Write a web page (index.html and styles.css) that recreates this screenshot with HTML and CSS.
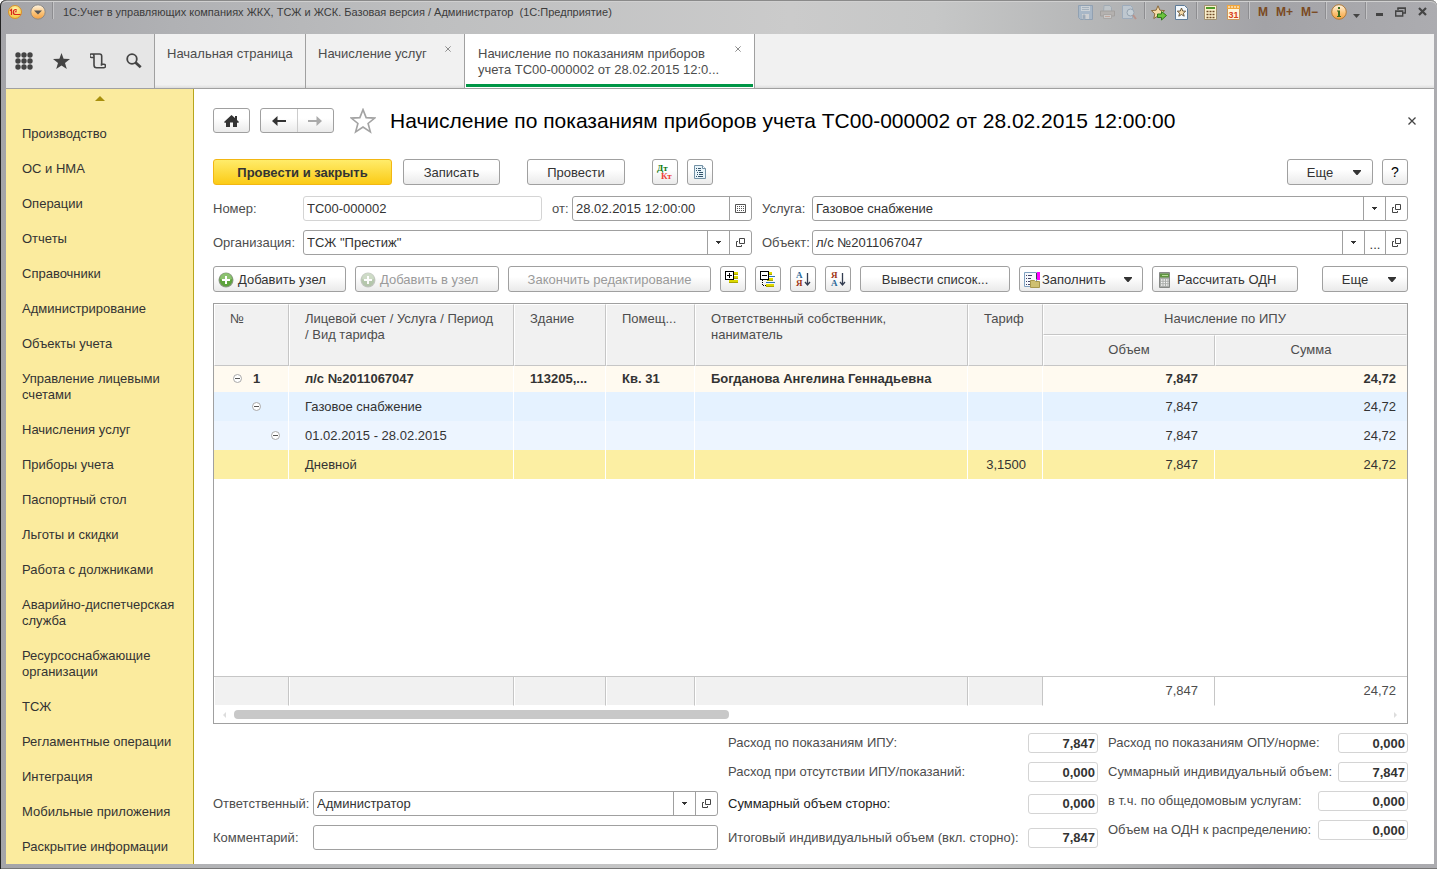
FILE: index.html
```html
<!DOCTYPE html>
<html lang="ru">
<head>
<meta charset="utf-8">
<title>Начисление по показаниям приборов учета</title>
<link rel="stylesheet" href="styles.css">
</head>
<body>
<svg class="sprite" aria-hidden="true">
  <symbol id="i-down" viewBox="0 0 5 3"><path d="M0 0h5v1H4v1H3v1H2V2H1V1H0z" fill="#333"/></symbol>
  <symbol id="i-caret" viewBox="0 0 8 5"><path d="M0 0h8v1L4.500 5h-1L0 1z" fill="#333"/></symbol>
  <symbol id="i-open" viewBox="0 0 9 9"><path d="M3.500.5h5v5h-5zM2 3.500H.5v5h5V7" fill="none" stroke="#444"/></symbol>
  <symbol id="i-x" viewBox="0 0 8 8"><path d="M.5.5l7 7M7.500.5l-7 7" fill="none" stroke="currentColor" stroke-width="1.300"/></symbol>
  <symbol id="i-plus" viewBox="0 0 16 16"><circle cx="8" cy="8" r="7.500" fill="#8e9a88"/><circle cx="8" cy="8" r="6.500" fill="#5ea33c"/><path d="M2 7a6 6 0 0 1 12 0q-6 3-12 0z" fill="#8cc270"/><path d="M8 4v8M4 8h8" stroke="#fff" stroke-width="2"/></symbol>
  <symbol id="i-minus" viewBox="0 0 9 9"><circle cx="4.500" cy="4.500" r="4" fill="#fff" stroke="#a8a8a8"/><path d="M2 4.500h5" stroke="#555"/></symbol>
</svg>
<div class="window">
  <header class="titlebar">
    <svg class="logo" viewBox="0 0 14 14"><defs><radialGradient id="g1" cx=".5" cy=".3" r=".8"><stop offset="0" stop-color="#fff8b0"/><stop offset="1" stop-color="#f4b928"/></radialGradient></defs><circle cx="7" cy="7" r="6.500" fill="url(#g1)" stroke="#d8902c"/><path d="M2 5.700l1.500-1.200V10M8.800 5.300C7.800 4 5.300 4.600 5.300 7.200c0 1.500 1 2.300 2.300 2.300H12.500M8.600 7c-.8-.6-1.600-.2-1.500.3" fill="none" stroke="#d8251c" stroke-width="1.200"/></svg>
    <button class="round-btn" aria-label="Главное меню"><svg viewBox="0 0 16 16"><defs><linearGradient id="g2" x2="0" y2="1"><stop offset="0" stop-color="#fff6e4"/><stop offset=".55" stop-color="#fbc47a"/><stop offset="1" stop-color="#f4a040"/></linearGradient></defs><circle cx="8" cy="8" r="7.200" fill="url(#g2)" stroke="#8c8a88"/><path d="M4 6.500h8L8 10.500z" fill="#555"/></svg></button>
    <span class="tb-sep"></span>
    <h2 class="app-title">1С:Учет в управляющих компаниях ЖКХ, ТСЖ и ЖСК. Базовая версия / Администратор&nbsp; (1С:Предприятие)</h2>
    <div class="sys">
      <button class="s-save" aria-label="Сохранить"><svg viewBox="0 0 15 15"><path d="M.5.5h14v14H2.500l-2-2z" fill="#a3b8ce" stroke="#8298b0"/><path d="M3 1h9v5H3z" fill="#d5dde4"/><path d="M4 9h7v5H4z" fill="#d7dadd"/><path d="M5 10h2v4H5zM4 2.500h7M4 4.500h7" fill="#8298b0" stroke="#a0b0c0"/></svg></button>
      <button class="s-print" aria-label="Печать"><svg viewBox="0 0 15 15"><path d="M4 .5h6l1.500 2V7h-8z" fill="#c4ccd2" stroke="#9aa8b4"/><path d="M.5 6h14v5H.5z" fill="#b5b0ad" stroke="#9b9794"/><path d="M3.500 9.500h8v4h-8z" fill="#d2d2d2" stroke="#a5a19d"/><path d="M5 11.500h5" stroke="#c8a090"/></svg></button>
      <button class="s-prev" aria-label="Просмотр"><svg viewBox="0 0 15 15"><path d="M.5.5h8l2 2v11H.5z" fill="#c1ccd6" stroke="#98aabd"/><circle cx="8.500" cy="7.500" r="3.500" fill="#ccd8e0" stroke="#8fa0b0"/><path d="M11 10l3 4" stroke="#b98d84" stroke-width="2"/></svg></button>
      <span class="tb-sep"></span>
      <button class="s-fav" aria-label="В избранное"><svg viewBox="0 0 16 16"><path d="M7 .8l1.900 4.400 4.700.4-3.500 3.200 1 4.700L7 11l-4.200 2.500 1-4.700L.4 5.600l4.700-.4z" fill="#f7dba8" stroke="#8a6a3c"/><path d="M6.500 9h4V6.500l5 4-5 4.500v-2.500h-4z" fill="#6cc33c" stroke="#2f7a18"/></svg></button>
      <button class="s-favlist" aria-label="Избранное"><svg viewBox="0 0 13 15"><path d="M.5.500h9l3 3v11H.5z" fill="#f3f8fc" stroke="#5e7c99"/><path d="M6.500 3l1.200 3 3 .2-2.300 2 .8 3-2.700-1.700L3.800 11.200l.8-3-2.300-2 3-.2z" fill="#f7dba8" stroke="#6b5a40"/></svg></button>
      <span class="tb-sep"></span>
      <button class="s-calc" aria-label="Калькулятор"><svg viewBox="0 0 13 15"><path d="M.5.500h12v14H.5z" fill="#fcf0cc" stroke="#a09070"/><path d="M2 2h9v2H2z" fill="#4e9a28"/><path d="M2.500 6.500h2m1 0h2m1 0h2m-8 3h2m1 0h2m1 0h2m-8 3h2m1 0h2m1 0h2" stroke="#6e4a28" stroke-width="1.500"/></svg></button>
      <button class="s-date" aria-label="Календарь"><svg viewBox="0 0 13 15"><path d="M.5.500h12v14H.5z" fill="#fff6dc" stroke="#c89860"/><path d="M0 0h13v4H0z" fill="#f2a73c"/><path d="M2 1v2m3-2v2m3-2v2m3-2v2" stroke="#fff"/><text x="6.500" y="13" text-anchor="middle" class="cal-text">31</text></svg></button>
      <span class="tb-sep"></span>
      <button class="s-m">M</button><button class="s-m">M+</button><button class="s-m">M−</button>
      <span class="tb-sep"></span>
      <button class="s-info" aria-label="Справка"><svg viewBox="0 0 16 16"><circle cx="8" cy="8" r="7.300" fill="url(#g2)" stroke="#b07a38"/><path d="M7 3h2v2H7zM6 6.500h3V12h1v1H6v-1h1V7.500H6z" fill="#3b6e1e"/></svg></button>
      <button class="s-more" aria-label="Еще"><svg viewBox="0 0 7 4"><path d="M0 0h7L3.500 4z" fill="#444"/></svg></button>
      <span class="tb-sep"></span>
      <button class="s-min" aria-label="Свернуть"><svg viewBox="0 0 7 3"><path d="M0 0h7v3H0z" fill="#444"/></svg></button>
      <button class="s-max" aria-label="Развернуть"><svg viewBox="0 0 11 10"><path d="M3 3V1h7.300v5H8M.7 4h7v5h-7z" fill="none" stroke="#444" stroke-width="1.400"/><path d="M.5 4.500h7M2.500 1.500h8" stroke="#444"/></svg></button>
      <button class="s-close" aria-label="Закрыть"><svg viewBox="0 0 9 9"><path d="M1 1l7 7M8 1L1 8" stroke="#444" stroke-width="2.200"/></svg></button>
    </div>
  </header>

  <nav class="tabs">
    <div class="tools">
      <button aria-label="Меню"><svg class="t-grid" viewBox="0 0 18 18" fill="#444"><circle cx="3" cy="3" r="2.700"/><circle cx="9" cy="3" r="2.700"/><circle cx="15" cy="3" r="2.700"/><circle cx="3" cy="9" r="2.700"/><circle cx="9" cy="9" r="2.700"/><circle cx="15" cy="9" r="2.700"/><circle cx="3" cy="15" r="2.700"/><circle cx="9" cy="15" r="2.700"/><circle cx="15" cy="15" r="2.700"/></svg></button>
      <button aria-label="Избранное"><svg class="t-star" viewBox="0 0 17 16"><path d="M8.500 0l2.100 5.700 6.400.3-5 3.900 1.800 6.100-5.300-3.500L3.200 16 5 9.900 0 6l6.400-.3z" fill="#444"/></svg></button>
      <button aria-label="История"><svg class="t-scroll" viewBox="0 0 16 16" fill="none" stroke="#444" stroke-width="1.600"><path d="M3.500 4.500H1.500a1.400 1.400 0 0 1 0-3.500H9.500q2.200 0 2.200 2.200V11M4 4.500V12q0 2.800 2.500 2.800h7.300a1.400 1.400 0 0 0 0-3.500H11.500v1.500M2 1q2 0 2 2v2"/></svg></button>
      <button aria-label="Поиск"><svg class="t-find" viewBox="0 0 16 16" fill="none" stroke="#444"><circle cx="6" cy="6" r="4.800" stroke-width="1.800"/><path d="M9.500 9.500l5.200 4.700" stroke-width="2.800"/></svg></button>
    </div>
    <a class="tab tab-home" href="#"><span>Начальная страница</span></a>
    <a class="tab tab-list" href="#"><span>Начисление услуг</span><svg class="tab-x"><use href="#i-x"/></svg></a>
    <a class="tab tab-doc" href="#"><span>Начисление по показаниям приборов<br>учета ТС00-000002 от 28.02.2015 12:0...</span><svg class="tab-x"><use href="#i-x"/></svg></a>
  </nav>

  <div class="body">
    <aside class="side">
      <svg class="side-up" viewBox="0 0 10 5"><path d="M5 0l5 5H0z" fill="#a8900c"/></svg>
      <a href="#">Производство</a>
      <a href="#">ОС и НМА</a>
      <a href="#">Операции</a>
      <a href="#">Отчеты</a>
      <a href="#">Справочники</a>
      <a href="#">Администрирование</a>
      <a href="#">Объекты учета</a>
      <a href="#">Управление лицевыми счетами</a>
      <a href="#">Начисления услуг</a>
      <a href="#">Приборы учета</a>
      <a href="#">Паспортный стол</a>
      <a href="#">Льготы и скидки</a>
      <a href="#">Работа с должниками</a>
      <a href="#">Аварийно-диспетчерская служба</a>
      <a href="#">Ресурсоснабжающие организации</a>
      <a href="#">ТСЖ</a>
      <a href="#">Регламентные операции</a>
      <a href="#">Интеграция</a>
      <a href="#">Мобильные приложения</a>
      <a href="#">Раскрытие информации</a>
    </aside>

    <main class="doc">
      <div class="head">
        <button class="btn home" aria-label="Домой"><svg viewBox="0 0 15 12"><path d="M7.500 0L11 3V1h2v4l2 2-1 1-1-.5V12H9V7.500H6V12H2V7.500L1 8 0 7z" fill="#333"/></svg></button>
        <div class="nav">
          <button aria-label="Назад"><svg viewBox="0 0 14 10"><path d="M5.500 0v4H14v2H5.500v4L0 5z" fill="#333"/></svg></button>
          <button aria-label="Вперед"><svg viewBox="0 0 14 10"><path d="M8.500 0v4H0v2h8.500v4L14 5z" fill="#aaa"/></svg></button>
        </div>
        <svg class="fav" viewBox="0 0 24 24"><path d="M12 1.500l2.900 7.400 7.900.4-6.100 5 2.100 7.700-6.800-4.400L5.200 22l2.100-7.700-6.100-5 7.900-.4z" fill="#fff" stroke="#a3a3a3" stroke-width="1.500"/></svg>
        <h1>Начисление по показаниям приборов учета ТС00-000002 от 28.02.2015 12:00:00</h1>
        <button class="doc-close" aria-label="Закрыть"><svg><use href="#i-x"/></svg></button>
      </div>

      <div class="bar commands">
        <button class="btn primary">Провести и закрыть</button>
        <button class="btn save">Записать</button>
        <button class="btn post">Провести</button>
        <button class="btn sq" aria-label="Дт Кт"><svg viewBox="0 0 16 16"><text x="0" y="7" class="dt">Дт</text><text x="4" y="15" class="kt">Кт</text></svg></button>
        <button class="btn sq" aria-label="Отчет"><svg viewBox="0 0 16 16"><path d="M2.500 1.500h8l3 3v10h-11z" fill="#e8f4fa" stroke="#7391a5"/><path d="M10.500 1.500v3h3" fill="#fff" stroke="#7391a5"/><path d="M4 4.500h1m1 0h3M4 6.500h1m1 0h3M5 8.500h1m1 0h4M5 10.500h1m1 0h4M4 12.500h1m1 0h5" stroke="#34536a"/></svg></button>
        <button class="btn more push">Еще<svg class="caret"><use href="#i-caret"/></svg></button>
        <button class="btn sq help">?</button>
      </div>

      <div class="fields">
        <label for="num">Номер:</label>
        <div class="pair">
          <input id="num" class="inp pale" value="ТС00-000002" readonly>
          <label for="date">от:</label>
          <div class="combo date"><input id="date" value="28.02.2015 12:00:00"><button aria-label="Календарь"><svg class="calico" viewBox="0 0 11 9"><path d="M.5.500h10v8H.5z" fill="#fff" stroke="#555"/><path d="M2 2.500h7M2 4.500h7M2 6.500h7" stroke="#555" stroke-dasharray="1 1"/></svg></button></div>
        </div>
        <label for="serv">Услуга:</label>
        <div class="combo"><input id="serv" value="Газовое снабжение"><button aria-label="Выбрать"><svg class="down"><use href="#i-down"/></svg></button><button aria-label="Открыть"><svg class="open"><use href="#i-open"/></svg></button></div>
        <label for="org">Организация:</label>
        <div class="combo"><input id="org" value='ТСЖ "Престиж"'><button aria-label="Выбрать"><svg class="down"><use href="#i-down"/></svg></button><button aria-label="Открыть"><svg class="open"><use href="#i-open"/></svg></button></div>
        <label for="obj">Объект:</label>
        <div class="combo"><input id="obj" value="л/с №2011067047"><button aria-label="Выбрать"><svg class="down"><use href="#i-down"/></svg></button><button class="dots">...</button><button aria-label="Открыть"><svg class="open"><use href="#i-open"/></svg></button></div>
      </div>

      <div class="bar">
        <button class="btn w133 ico"><svg class="plus"><use href="#i-plus"/></svg>Добавить узел</button>
        <button class="btn w144 ico" disabled><svg class="plus"><use href="#i-plus"/></svg>Добавить в узел</button>
        <button class="btn w203" disabled>Закончить редактирование</button>
        <button class="btn sq" aria-label="Развернуть"><svg viewBox="0 0 16 16" shape-rendering="crispEdges"><path d="M8 1h5v3H8zM8 5h5v3H8zM4 9h9v3H4z" fill="#dcd800"/><path d="M8 3h5v1H8zM8 7h5v1H8zM4 11h9v1H4z" fill="#a8a400"/><path d="M.5.5h8v8h-8z" fill="#fff" stroke="#000"/><path d="M2 4.500h5M4.500 2v5" stroke="#000"/></svg></button>
        <button class="btn sq" aria-label="Свернуть"><svg viewBox="0 0 16 16" shape-rendering="crispEdges"><path d="M7 1h5v3H7zM7 7h6v3H7zM6 13h8v3H6z" fill="#dcd800"/><path d="M7 3h5v1H7zM7 9h6v1H7zM6 15h8v1H6z" fill="#a8a400"/><path d="M9 5.500h6M6 11.500h9" stroke="#2a72b8"/><path d="M2.500 9v5.500H6" fill="none" stroke="#000" stroke-dasharray="1 1"/><path d="M.5.5h8v8h-8z" fill="#fff" stroke="#000"/><path d="M2 4.500h5" stroke="#000"/></svg></button>
        <button class="btn sq" aria-label="По возрастанию"><svg viewBox="0 0 16 18"><text x="1" y="8" class="srt blue">А</text><text x="1" y="16" class="srt red">Я</text><path d="M12.500 3v12M10 12l2.500 3 2.500-3" fill="none" stroke="#333c50" stroke-width="1.300"/></svg></button>
        <button class="btn sq" aria-label="По убыванию"><svg viewBox="0 0 16 18"><text x="1" y="8" class="srt red">Я</text><text x="1" y="16" class="srt blue">А</text><path d="M12.500 3v12M10 12l2.500 3 2.500-3" fill="none" stroke="#333c50" stroke-width="1.300"/></svg></button>
        <button class="btn w150">Вывести список...</button>
        <button class="btn w124 ico fill"><svg class="plus" viewBox="0 0 16 16"><path d="M.5.500h12v14H.5z" fill="#f6f9fd" stroke="#7fa0c0"/><path d="M2 3.500h1m1 0h4M2 6.500h1m1 0h3M2 9.500h1m1 0h2M2 12.500h1m1 0h2" stroke="#446"/><path d="M13 0h3v8h-3z" fill="#f0f"/><path d="M12 1h1v6h-1z" fill="#345"/><path d="M6.500 8.500h4l1 1h4v6h-9z" fill="#cfc070" stroke="#a8984c"/></svg>Заполнить<svg class="caret"><use href="#i-caret"/></svg></button>
        <button class="btn w146 ico"><svg class="plus" viewBox="0 0 16 16"><path d="M2.500.5h10v15h-10z" fill="#a9aca9" stroke="#868886"/><path d="M3 1.500h9v4H3z" fill="#5e9440"/><path d="M5 3.500h6" stroke="#b8dc98"/><path d="M4 8h8M4 10.500h8M4 13h8" stroke="#f4f4f4" stroke-width="1.500" stroke-dasharray="1.500 1"/></svg>Рассчитать ОДН</button>
        <button class="btn more push">Еще<svg class="caret"><use href="#i-caret"/></svg></button>
      </div>

      <section class="grid">
        <div class="grid-body">
          <table>
            <colgroup><col class="c1"><col class="c2"><col class="c3"><col class="c4"><col class="c5"><col class="c6"><col class="c7"><col></colgroup>
            <thead>
              <tr><th rowspan="2">№</th><th rowspan="2">Лицевой счет / Услуга / Период / Вид тарифа</th><th rowspan="2">Здание</th><th rowspan="2">Помещ...</th><th rowspan="2">Ответственный собственник, наниматель</th><th rowspan="2">Тариф</th><th colspan="2" class="mid">Начисление по ИПУ</th></tr>
              <tr><th class="mid">Объем</th><th class="mid">Сумма</th></tr>
            </thead>
            <tbody>
              <tr class="r1"><td class="tree l1"><svg><use href="#i-minus"/></svg>1</td><td>л/с №2011067047</td><td>113205,...</td><td>Кв. 31</td><td>Богданова Ангелина Геннадьевна</td><td></td><td class="n">7,847</td><td class="n last">24,72</td></tr>
              <tr class="r2"><td class="tree l2"><svg><use href="#i-minus"/></svg></td><td>Газовое снабжение</td><td></td><td></td><td></td><td></td><td class="n">7,847</td><td class="n last">24,72</td></tr>
              <tr class="r3"><td class="tree l3"><svg><use href="#i-minus"/></svg></td><td>01.02.2015 - 28.02.2015</td><td></td><td></td><td></td><td></td><td class="n">7,847</td><td class="n last">24,72</td></tr>
              <tr class="r4"><td></td><td>Дневной</td><td></td><td></td><td></td><td class="n">3,1500</td><td class="n">7,847</td><td class="n last">24,72</td></tr>
            </tbody>
          </table>
        </div>
        <table class="totals">
          <colgroup><col class="c1"><col class="c2"><col class="c3"><col class="c4"><col class="c5"><col class="c6"><col class="c7"><col></colgroup>
          <tbody><tr><td></td><td></td><td></td><td></td><td></td><td></td><td class="n sum">7,847</td><td class="n last sum">24,72</td></tr></tbody>
        </table>
        <div class="hscroll"><svg viewBox="0 0 3 6"><path d="M3 0v6L0 3z" fill="#ddd"/></svg><div class="track"><div class="thumb"></div></div><svg viewBox="0 0 3 6"><path d="M0 0v6l3-3z" fill="#ddd"/></svg></div>
      </section>

      <footer class="foot">
        <div class="who">
          <label for="resp">Ответственный:</label>
          <div class="combo"><input id="resp" value="Администратор"><button aria-label="Выбрать"><svg class="down"><use href="#i-down"/></svg></button><button aria-label="Открыть"><svg class="open"><use href="#i-open"/></svg></button></div>
          <label for="comm">Комментарий:</label>
          <input id="comm" class="inp">
        </div>
        <div class="sums left">
          <label for="s1">Расход по показаниям ИПУ:</label><input id="s1" value="7,847" readonly>
          <label for="s2">Расход при отсутствии ИПУ/показаний:</label><input id="s2" value="0,000" readonly>
          <label for="s3" class="dark">Суммарный объем сторно:</label><input id="s3" value="0,000" readonly>
          <label for="s4">Итоговый индивидуальный объем (вкл. сторно):</label><input id="s4" value="7,847" readonly>
        </div>
        <div class="sums right">
          <div><label for="s5">Расход по показаниям ОПУ/норме:</label><input id="s5" value="0,000" readonly></div>
          <div><label for="s6">Суммарный индивидуальный объем:</label><input id="s6" value="7,847" readonly></div>
          <div><label for="s7">в т.ч. по общедомовым услугам:</label><input id="s7" class="wide" value="0,000" readonly></div>
          <div><label for="s8">Объем на ОДН к распределению:</label><input id="s8" class="wide" value="0,000" readonly></div>
        </div>
      </footer>
    </main>
  </div>
</div>
</body>
</html>
```
FILE: styles.css
```css
* { box-sizing: border-box; }
body { margin: 0; font: 13px/16px "Liberation Sans", Arial, sans-serif; color: #333; }
button, input { font: inherit; color: inherit; margin: 0; }
button { padding: 0; border: 0; background: none; }
a { color: inherit; text-decoration: none; }
svg { display: block; flex: none; }
.sprite { position: absolute; width: 0; height: 0; }

.window {
  display: flex; flex-direction: column; min-height: 100vh;
  padding: 0 3px 5px 6px;
  border-radius: 6px 6px 0 0;
  background: linear-gradient(90deg, #a4a4a8 0, #b0b1b4 12%, #bebfc0 30%, #cbcbcb 55%, #c6c7c7 65%, #b4b5b6 77%, #a3a3a7 88%, #acacb0 100%);
  box-shadow: inset 1px 0 #222, inset 0 -1px #777, inset 0 1px #8a8a8a, inset 0 2px #d0d0d0;
}

/* title bar */
.titlebar { display: flex; align-items: flex-start; height: 34px; padding: 4px 5px 0 2px; }
.logo { width: 14px; height: 14px; margin-top: 1px; }
.round-btn { margin-left: 8px; }
.round-btn svg { width: 16px; height: 16px; }
.tb-sep { width: 2px; height: 17px; margin-top: -2px; background: linear-gradient(90deg, #8d8d90 50%, #c4c4c6 50%); }
.round-btn + .tb-sep { margin-left: 6px; }
.app-title { margin: 0 0 0 9px; font-size: 11px; font-weight: 400; line-height: 16px; color: #3c3c3c; white-space: nowrap; }
.sys { display: flex; align-items: flex-start; margin-left: auto; }
.sys svg { width: 15px; height: 15px; }
.s-save { margin-right: -2px; opacity: .7; }
.s-print { margin-left: 9px; opacity: .7; }
.s-prev { margin: 0 7px; opacity: .8; }
.s-save, .s-print, .s-prev, .s-fav, .s-favlist, .s-calc, .s-date { margin-top: 1px; }
.s-fav { margin-left: 5px; }
.sys .s-fav svg { width: 16px; height: 16px; }
.sys .s-favlist svg, .sys .s-calc svg, .sys .s-date svg { width: 13px; height: 15px; }
.s-favlist { margin-left: 8px; margin-right: 8px; }
.s-calc { margin-left: 6px; }
.s-date { margin-left: 10px; margin-right: 8px; }
.cal-text { font: bold 9px "Liberation Sans", Arial, sans-serif; fill: #d8401c; }
.s-m { margin-left: 8px; font-size: 12px; font-weight: 700; color: #7a4a22; }
.s-m + .tb-sep { margin-left: 7px; }
.s-info { margin-left: 4px; }
.sys .s-info svg { width: 16px; height: 16px; }
.s-more { margin: 10px 5px 0 6px; }
.sys .s-more svg { width: 7px; height: 4px; }
.s-min { margin: 9px 12px 0 9px; }
.sys .s-min svg { width: 7px; height: 3px; }
.s-max { margin: 3px 12px 0 0; }
.sys .s-max svg { width: 11px; height: 10px; }
.s-close { margin: 3px 2px 0 0; }
.sys .s-close svg { width: 9px; height: 9px; }

/* tabs */
.tabs { display: flex; height: 55px; background: linear-gradient(#f1f1f1 94%, #ddd); border-bottom: 1px solid #a0a0a0; }
.tools { display: flex; align-items: center; gap: 20px; width: 148px; padding-left: 9px; background: #e6e6e6; }
.t-grid { width: 18px; height: 18px; }
.t-star { width: 17px; height: 16px; }
.t-scroll, .t-find { width: 16px; height: 16px; }
.tab { position: relative; padding: 12px 13px 0 12px; border-left: 1px solid #a0a0a0; color: #4c4c4c; white-space: nowrap; }
.tab-home { width: 151px; }
.tab-list { width: 159px; }
.tab-doc { width: 291px; padding-left: 13px; border-right: 1px solid #a0a0a0; background: linear-gradient(#009646, #009646) center bottom 1px / calc(100% - 2px) 3px no-repeat #fff; }
.tab-x { position: absolute; top: 12px; right: 13px; width: 6px; height: 6px; color: #8a8a8a; }

/* section panel */
.body { display: flex; flex: 1; }
.side { display: flex; flex-direction: column; gap: 19px; width: 188px; padding: 7px 16px 0; background: #fbeb9e; border-right: 1px solid #b8a61c; }
.side-up { width: 10px; height: 5px; margin: 0 0 6px 73px; }

/* document */
.doc { display: flex; flex: 1; flex-direction: column; min-width: 0; padding: 19px 26px 14px 19px; background: #fff; }
.head { display: flex; align-items: center; height: 25px; }
.btn, .nav { display: flex; align-items: center; justify-content: center; height: 26px; border: 1px solid #a0a0a0; border-radius: 3px; background: linear-gradient(#fff 40%, #eaeaea); white-space: nowrap; }
.btn { padding-top: 1px; }
.btn:disabled { color: #9a9a9a; }
.btn:disabled svg { opacity: .5; filter: grayscale(.5); }
.home { width: 37px; height: 25px; }
.home svg { width: 15px; height: 12px; }
.nav { width: 74px; height: 25px; margin-left: 10px; }
.nav button { display: flex; flex: 1; align-items: center; justify-content: center; height: 100%; }
.nav button + button { border-left: 1px solid #ccc; }
.nav svg { width: 14px; height: 10px; }
.fav { width: 26px; height: 26px; margin: 0 14px 0 16px; }
h1 { margin: 0; font-size: 21px; font-weight: 400; line-height: 24px; color: #000; white-space: nowrap; }
.doc-close { margin: 0 -8px 0 auto; color: #444; }
.doc-close svg { width: 8px; height: 8px; }

.bar { display: flex; gap: 9px; margin-top: 11px; }
.commands { margin-top: 26px; }
.primary { width: 179px; border-color: #f2b713; background: linear-gradient(#ffec6a, #fbcb16); font-weight: 700; }
.save { width: 97px; margin: 0 18px 0 2px; }
.post { width: 98px; margin-right: 18px; }
.sq { width: 26px; padding-top: 0; }
.sq svg { width: 16px; height: 16px; overflow: visible; }
.sq svg[viewBox="0 0 16 18"] { height: 18px; }
.help { font-size: 14px; color: #000; }
.push { margin-left: auto; }
.more { width: 86px; gap: 20px; padding-left: 8px; }
.caret { width: 8px; height: 5px; }
.dt, .kt { font: bold 9px "Liberation Serif", serif; fill: #0f7a0f; }
.kt { fill: #f04038; }
.srt { font: bold 9px "Liberation Serif", serif; }
.blue { fill: #2a6898; }
.red { fill: #a03414; }
.ico { justify-content: flex-start; gap: 4px; padding-left: 4px; }
.plus { width: 16px; height: 16px; }
.w133 { width: 133px; } .w144 { width: 144px; } .w203 { width: 203px; } .w150 { width: 150px; } .w124 { width: 124px; } .w146 { width: 146px; }
.fill { gap: 2px; }
.fill .caret { margin: 0 10px 0 auto; }

.fields { display: grid; grid-template-columns: 90px 449px 60px 1fr; row-gap: 9px; margin-top: 11px; align-items: center; }
.fields label, .who label { color: #4d4d4d; }
.fields > label:nth-of-type(even) { padding-left: 10px; }
.pair { display: flex; align-items: center; }
.pair .inp { flex: 1; min-width: 0; }
.pair label { width: 30px; padding-left: 10px; }
.inp, .combo { height: 25px; border: 1px solid #a0a0a0; border-radius: 3px; background: #fff; }
.inp { padding: 0 3px; }
.pale { border-color: #d4d4d4; }
.combo { display: flex; min-width: 0; }
.combo input { flex: 1; min-width: 0; padding: 0 3px; border: 0; background: none; }
.combo button { display: flex; align-items: center; justify-content: center; width: 22px; border-left: 1px solid #a0a0a0; }
.combo.date { width: 180px; }
.combo .dots { width: 21px; padding-top: 4px; }
.calico { width: 11px; height: 9px; }
.down { width: 5px; height: 3px; }
.open { width: 9px; height: 9px; }

/* tabular part */
.grid { display: flex; flex: 1; flex-direction: column; margin-top: 11px; border: 1px solid #a0a0a0; }
.grid-body { flex: 1; }
table { width: 100%; table-layout: fixed; border-collapse: separate; border-spacing: 0; }
.c1 { width: 75px; } .c2 { width: 225px; } .c3 { width: 92px; } .c4 { width: 89px; } .c5 { width: 273px; } .c6 { width: 75px; } .c7 { width: 172px; }
th { height: 31px; padding: 6px 15px 0; border: 1px solid #fff; border-right-color: #c6c6c6; border-bottom-color: #c6c6c6; background: #f1f1f1; font-weight: 400; text-align: left; vertical-align: top; color: #4d4d4d; white-space: nowrap; }
th:nth-child(2), th:nth-child(5) { white-space: normal; }
th.mid { text-align: center; }
thead th:last-child { border-right-color: #f1f1f1; }
td { height: 29px; padding: 0 16px 0 15px; border-right: 1px solid #fff; white-space: nowrap; }
td:nth-child(n+2) { padding-left: 16px; }
td.n { text-align: right; }
td.last { padding-right: 11px; border-right: 0; }
.r1 td { height: 26px; background: #fffaf0; font-weight: 700; }
.r2 td { background: #e5f2ff; }
.r3 td { background: #edf5ff; }
.r4 td { background: #fcefa3; }
.r1 td:nth-child(7), .r2 td:nth-child(7), .r3 td:nth-child(7) { border-right-color: transparent; }
.tree svg { display: inline-block; width: 9px; height: 9px; }
td.l1 { padding-left: 19px; }
.l1 svg { margin-right: 11px; }
td.l2 { padding-left: 38px; }
td.l3 { padding-left: 57px; }
.totals { border-top: 1px solid #c6c6c6; }
.totals td { background: #f1f1f1; border: 1px solid #fff; border-top: 0; border-right-color: #c6c6c6; color: #4d4d4d; }
.totals td.sum { background: #fff; }
.totals td.last { border-right: 0; }
.hscroll { display: flex; align-items: center; height: 17px; padding: 0 10px 0 9px; }
.hscroll svg { width: 3px; height: 6px; }
.track { flex: 1; padding: 0 8px; }
.thumb { width: 43%; height: 9px; border-radius: 4px; background: #c8c8c8; }

/* footer */
.foot { display: grid; grid-template-columns: 505px 1fr 300px; gap: 10px; margin-top: 9px; }
.who { display: grid; grid-template-columns: 100px 1fr; row-gap: 9px; align-content: end; align-items: center; }
.sums { color: #4d4d4d; }
.sums input { width: 70px; height: 20px; padding: 0 2px; border: 1px solid #d4d4d4; border-radius: 3px; background: #fff; font-weight: 700; text-align: right; color: #333; }
.left { display: grid; grid-template-columns: 1fr 70px; grid-template-rows: 20px 20px 25px 25px; row-gap: 9px; align-items: center; white-space: nowrap; }
.dark { color: #222; }
.right { display: flex; flex-direction: column; gap: 9px; }
.right div { display: flex; align-items: center; justify-content: space-between; white-space: nowrap; }
.sums .wide { width: 90px; }
```
